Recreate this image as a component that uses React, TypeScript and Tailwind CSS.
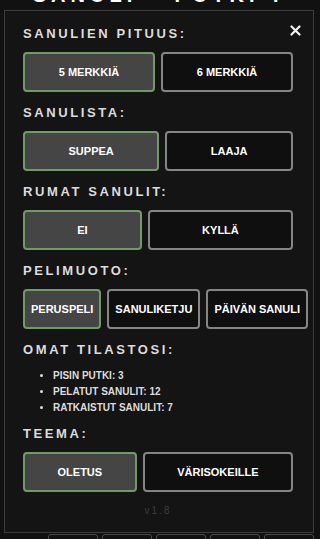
import { useState } from 'react'

const font = { fontFamily: '"Liberation Sans", Arial, sans-serif' }

type Opt = { label: string }

function Heading({ children }: { children: string }) {
  return (
    <h2 className="text-[13px] leading-[16px] font-bold tracking-[0.2em] text-[#dcdcdc] mb-[10px]">
      {children}
    </h2>
  )
}

function Choice({
  options,
  value,
  onChange,
}: {
  options: Opt[]
  value: number
  onChange: (i: number) => void
}) {
  return (
    <div className="flex gap-[6px] mb-[13px]">
      {options.map((o, i) => (
        <button
          key={o.label}
          onClick={() => onChange(i)}
          className={`flex-auto h-[40px] px-[6px] rounded-[4px] border-2 text-[11px] font-bold text-white whitespace-nowrap ${
            i === value
              ? 'bg-[#454545] border-[#719a68]'
              : 'bg-[#0f0f0f] border-[#858585]'
          }`}
        >
          {o.label}
        </button>
      ))}
    </div>
  )
}

export default function App() {
  const [len, setLen] = useState(0)
  const [list, setList] = useState(0)
  const [rude, setRude] = useState(0)
  const [mode, setMode] = useState(0)
  const [theme, setTheme] = useState(0)

  return (
    <div className="h-[539px] w-[320px] overflow-hidden bg-[#111111]" style={font}>
      {/* game title peeking behind the modal */}
      <div className="-mt-[15px] h-[20px] text-center text-[20px] leading-[20px] font-bold tracking-[0.25em] text-white">
        SANULI – PUTKI ?
      </div>

      {/* settings modal */}
      <div className="relative mt-[5px] ml-[4px] w-[310px] h-[523px] border border-[#3c3c3c] bg-[#141414] pt-[15px] pl-[18px] pr-[20px]">
        <button className="absolute right-[11px] top-[12px] w-[14px] h-[14px] flex items-center justify-center">
          <svg width="11" height="11" viewBox="0 0 11 11">
            <path d="M1.5 1.5 L9.5 9.5 M9.5 1.5 L1.5 9.5" stroke="#f2f2f2" strokeWidth="2.2" strokeLinecap="round" />
          </svg>
        </button>

        <Heading>SANULIEN PITUUS:</Heading>
        <Choice options={[{ label: '5 MERKKIÄ' }, { label: '6 MERKKIÄ' }]} value={len} onChange={setLen} />

        <Heading>SANULISTA:</Heading>
        <Choice options={[{ label: 'SUPPEA' }, { label: 'LAAJA' }]} value={list} onChange={setList} />

        <Heading>RUMAT SANULIT:</Heading>
        <Choice options={[{ label: 'EI' }, { label: 'KYLLÄ' }]} value={rude} onChange={setRude} />

        <Heading>PELIMUOTO:</Heading>
        <Choice
          options={[{ label: 'PERUSPELI' }, { label: 'SANULIKETJU' }, { label: 'PÄIVÄN SANULI' }]}
          value={mode}
          onChange={setMode}
        />

        <Heading>OMAT TILASTOSI:</Heading>
        <ul className="list-disc pl-[30px] mt-0 mb-[10px] text-[10px] leading-[16px] font-bold text-[#dcdcdc]">
          <li>PISIN PUTKI: 3</li>
          <li>PELATUT SANULIT: 12</li>
          <li>RATKAISTUT SANULIT: 7</li>
        </ul>

        <Heading>TEEMA:</Heading>
        <Choice options={[{ label: 'OLETUS' }, { label: 'VÄRISOKEILLE' }]} value={theme} onChange={setTheme} />

        <div className="mt-[2px] text-center text-[10px] leading-[12px] tracking-[0.2em] text-[#3d3d3d]">v1.8</div>
      </div>

      {/* keyboard row peeking below */}
      <div className="flex gap-[4px] pl-[48px] mt-[1px]">
        {[0, 1, 2, 3, 4].map((k) => (
          <div key={k} className="w-[50px] h-[30px] rounded-[3px] border border-[#4a4a4a] bg-[#121212]" />
        ))}
      </div>
    </div>
  )
}
